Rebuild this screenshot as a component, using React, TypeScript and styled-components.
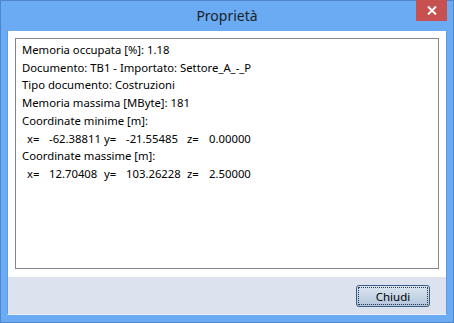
import React from 'react'
import styled, { createGlobalStyle } from 'styled-components'

const GlobalStyle = createGlobalStyle`
  html, body {
    margin: 0;
    padding: 0;
    background: #ffffff;
  }
  body {
    font-family: "Noto Sans", "Open Sans", sans-serif;
    font-size: 11.3px;
    color: #000;
  }
`

const info = [
  'Memoria occupata [%]: 1.18',
  'Documento: TB1 - Importato: Settore_A_-_P',
  'Tipo documento: Costruzioni',
  'Memoria massima [MByte]: 181',
]

type Coord = { x: string; y: string; z: string }

const minCoords: Coord = { x: '-62.38811', y: '-21.55485', z: '0.00000' }
const maxCoords: Coord = { x: '12.70408', y: '103.26228', z: '2.50000' }

const CoordRow = ({ c }: { c: Coord }) => (
  <Coords>
    <Axis>x=</Axis>
    <Value $w={48}>{c.x}</Value>
    <Axis $gap={7}>y=</Axis>
    <Value $w={51}>{c.y}</Value>
    <Axis $gap={10}>z=</Axis>
    <Value $w={41}>{c.z}</Value>
  </Coords>
)

const App = () => {
  return (
    <>
      <GlobalStyle />
      <Window>
        <TitleBar>
          <Title>Proprietà</Title>
          <CloseBtn>
            <svg width="10" height="9" viewBox="0 0 10 9">
              <path d="M1 0.5 L9 8.5 M9 0.5 L1 8.5" stroke="#fff" strokeWidth="2" />
            </svg>
          </CloseBtn>
        </TitleBar>
        <Client>
          <Body>
            <InfoBox>
              {info.map((t) => (
                <Line key={t}>{t}</Line>
              ))}
              <Line>Coordinate minime [m]:</Line>
              <CoordRow c={minCoords} />
              <Line>Coordinate massime [m]:</Line>
              <CoordRow c={maxCoords} />
            </InfoBox>
          </Body>
          <Footer>
            <Button>Chiudi</Button>
          </Footer>
        </Client>
      </Window>
    </>
  )
}

export default App

const Window = styled.div`
  width: 454px;
  height: 323px;
  box-sizing: border-box;
  display: flex;
  flex-direction: column;
  background: #6aabf4;
  border: 1px solid #4f85c9;
  padding: 0 6px 7px 6px;
`

const TitleBar = styled.div`
  position: relative;
  height: 30px;
  flex: none;
  display: flex;
  align-items: center;
  justify-content: center;
`

const Title = styled.div`
  font-family: "Noto Sans", sans-serif;
  font-size: 14px;
  color: #1a1f28;
  margin-top: -1px;
`

const CloseBtn = styled.div`
  position: absolute;
  top: -1px;
  right: 0;
  width: 31px;
  height: 21px;
  background: #c75050;
  display: flex;
  align-items: center;
  justify-content: center;
`

const Client = styled.div`
  flex: 1;
  display: flex;
  flex-direction: column;
  border: 1px solid #5e9ae3;
  border-top: none;
  border-bottom-color: #e9f0f9;
`

const Body = styled.div`
  flex: 1;
  background: #fff;
  padding: 7px 7px 8px 7px;
  display: flex;
`

const InfoBox = styled.div`
  flex: 1;
  border: 1px solid #828790;
  padding: 2px 6px;
  line-height: 17.7px;
`

const Line = styled.div`
  white-space: nowrap;
`

const Coords = styled.div`
  display: flex;
  padding-left: 5px;
  white-space: nowrap;
`

const Axis = styled.span<{ $gap?: number }>`
  flex: none;
  width: 22px;
  margin-left: ${(p) => p.$gap ?? 0}px;
`

const Value = styled.span<{ $w: number }>`
  flex: none;
  width: ${(p) => p.$w}px;
  text-align: right;
`

const Footer = styled.div`
  height: 37px;
  flex: none;
  background: #dce3ee;
  display: flex;
  justify-content: flex-end;
  align-items: flex-start;
  padding: 8px 16px 0 0;
  box-sizing: border-box;
`

const Button = styled.button`
  width: 74px;
  height: 22px;
  font-family: "Noto Sans", sans-serif;
  font-size: 11.5px;
  color: #000;
  border: 1px solid #3c5d87;
  border-radius: 3px;
  background: linear-gradient(#dde6f0, #b3c6dc);
  outline: 1px dotted #25374d;
  outline-offset: -3px;
  padding: 0;
`
